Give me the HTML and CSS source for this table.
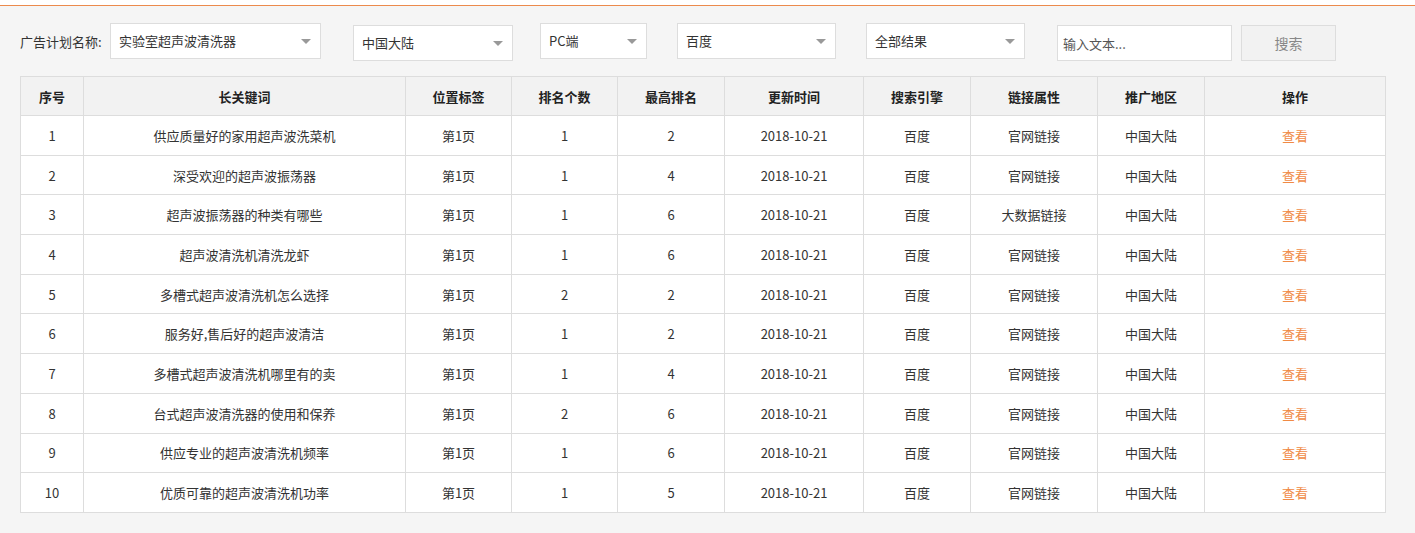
FILE: index.html
```html
<!DOCTYPE html>
<html lang="zh-CN">
<head>
<meta charset="utf-8">
<title>关键词排名</title>
<link rel="stylesheet" href="styles.css">
</head>
<body>
<div class="topbar"></div>
<main class="page">
  <div class="filters">
    <span class="label">广告计划名称:</span>
    <div class="select w1"><span>实验室超声波清洗器</span><i class="arrow"></i></div>
    <div class="select w2 low"><span>中国大陆</span><i class="arrow"></i></div>
    <div class="select w3"><span>PC端</span><i class="arrow"></i></div>
    <div class="select w4"><span>百度</span><i class="arrow"></i></div>
    <div class="select w5"><span>全部结果</span><i class="arrow"></i></div>
    <input class="text-input low" type="text" placeholder="输入文本...">
    <button class="btn low" type="button">搜索</button>
  </div>
  <table class="grid">
    <colgroup>
      <col style="width:63px"><col style="width:322px"><col style="width:106px"><col style="width:106px"><col style="width:107px"><col style="width:139px"><col style="width:107px"><col style="width:127px"><col style="width:107px"><col style="width:181px">
    </colgroup>
    <thead>
      <tr><th>序号</th><th>长关键词</th><th>位置标签</th><th>排名个数</th><th>最高排名</th><th>更新时间</th><th>搜索引擎</th><th>链接属性</th><th>推广地区</th><th>操作</th></tr>
    </thead>
    <tbody>
      <tr><td>1</td><td>供应质量好的家用超声波洗菜机</td><td>第1页</td><td>1</td><td>2</td><td>2018-10-21</td><td>百度</td><td>官网链接</td><td>中国大陆</td><td><a class="view">查看</a></td></tr>
      <tr><td>2</td><td>深受欢迎的超声波振荡器</td><td>第1页</td><td>1</td><td>4</td><td>2018-10-21</td><td>百度</td><td>官网链接</td><td>中国大陆</td><td><a class="view">查看</a></td></tr>
      <tr><td>3</td><td>超声波振荡器的种类有哪些</td><td>第1页</td><td>1</td><td>6</td><td>2018-10-21</td><td>百度</td><td>大数据链接</td><td>中国大陆</td><td><a class="view">查看</a></td></tr>
      <tr><td>4</td><td>超声波清洗机清洗龙虾</td><td>第1页</td><td>1</td><td>6</td><td>2018-10-21</td><td>百度</td><td>官网链接</td><td>中国大陆</td><td><a class="view">查看</a></td></tr>
      <tr><td>5</td><td>多槽式超声波清洗机怎么选择</td><td>第1页</td><td>2</td><td>2</td><td>2018-10-21</td><td>百度</td><td>官网链接</td><td>中国大陆</td><td><a class="view">查看</a></td></tr>
      <tr><td>6</td><td>服务好,售后好的超声波清洁</td><td>第1页</td><td>1</td><td>2</td><td>2018-10-21</td><td>百度</td><td>官网链接</td><td>中国大陆</td><td><a class="view">查看</a></td></tr>
      <tr><td>7</td><td>多槽式超声波清洗机哪里有的卖</td><td>第1页</td><td>1</td><td>4</td><td>2018-10-21</td><td>百度</td><td>官网链接</td><td>中国大陆</td><td><a class="view">查看</a></td></tr>
      <tr><td>8</td><td>台式超声波清洗器的使用和保养</td><td>第1页</td><td>2</td><td>6</td><td>2018-10-21</td><td>百度</td><td>官网链接</td><td>中国大陆</td><td><a class="view">查看</a></td></tr>
      <tr><td>9</td><td>供应专业的超声波清洗机频率</td><td>第1页</td><td>1</td><td>6</td><td>2018-10-21</td><td>百度</td><td>官网链接</td><td>中国大陆</td><td><a class="view">查看</a></td></tr>
      <tr><td>10</td><td>优质可靠的超声波清洗机功率</td><td>第1页</td><td>1</td><td>5</td><td>2018-10-21</td><td>百度</td><td>官网链接</td><td>中国大陆</td><td><a class="view">查看</a></td></tr>
    </tbody>
  </table>
</main>
</body>
</html>
```
FILE: styles.css
```css
html, body {
  margin: 0;
  padding: 0;
  background: #f5f5f5;
  font-family: "Noto Sans CJK SC", "Liberation Sans", sans-serif;
  font-size: 13px;
  color: #333;
}
.topbar {
  height: 5px;
  background: #fff;
  border-bottom: 1px solid #ec8a4c;
}
.page {
  padding: 17px 20px 0 20px;
  height: 511px;
  box-sizing: border-box;
}
.filters {
  display: flex;
  align-items: flex-start;
  height: 53px;
}
.label {
  line-height: 38px;
  width: 90px;
  color: #333;
  font-size: 13px;
}
.select {
  position: relative;
  height: 36px;
  box-sizing: border-box;
  background: #fff;
  border: 1px solid #ddd;
  padding-left: 8px;
  line-height: 34px;
  font-size: 13px;
  color: #333;
}
.low { margin-top: 2px; }
.w1 { width: 211px; }
.w2 { width: 160px; margin-left: 32px; }
.w3 { width: 107px; margin-left: 27px; }
.w4 { width: 159px; margin-left: 30px; }
.w5 { width: 159px; margin-left: 30px; }
.arrow {
  position: absolute;
  right: 9px;
  top: 15px;
  width: 0;
  height: 0;
  border-left: 5px solid transparent;
  border-right: 5px solid transparent;
  border-top: 5px solid #999;
}
.text-input {
  width: 175px;
  height: 36px;
  box-sizing: border-box;
  margin-left: 32px;
  border: 1px solid #ddd;
  background: #fff;
  padding: 0 5px;
  font-family: inherit;
  font-size: 13px;
  color: #333;
  outline: none;
}
.text-input::placeholder { color: #555; }
.btn {
  width: 95px;
  height: 36px;
  box-sizing: border-box;
  margin-left: 9px;
  border: 1px solid #ddd;
  background: #f2f2f2;
  color: #888;
  font-family: inherit;
  font-size: 14px;
  padding: 0;
}
.grid {
  width: 1366px;
  border-collapse: collapse;
  table-layout: fixed;
  background: #fff;
  margin-top: 0;
}
.grid th, .grid td {
  border: 1px solid #ddd;
  text-align: center;
  padding: 0;
  font-size: 13px;
}
.grid th {
  background: #f2f2f2;
  font-weight: bold;
  color: #222;
  height: 38px;
}
.grid td {
  height: 38.7px;
  color: #333;
}
.view {
  color: #f08a45;
  cursor: pointer;
}
```
